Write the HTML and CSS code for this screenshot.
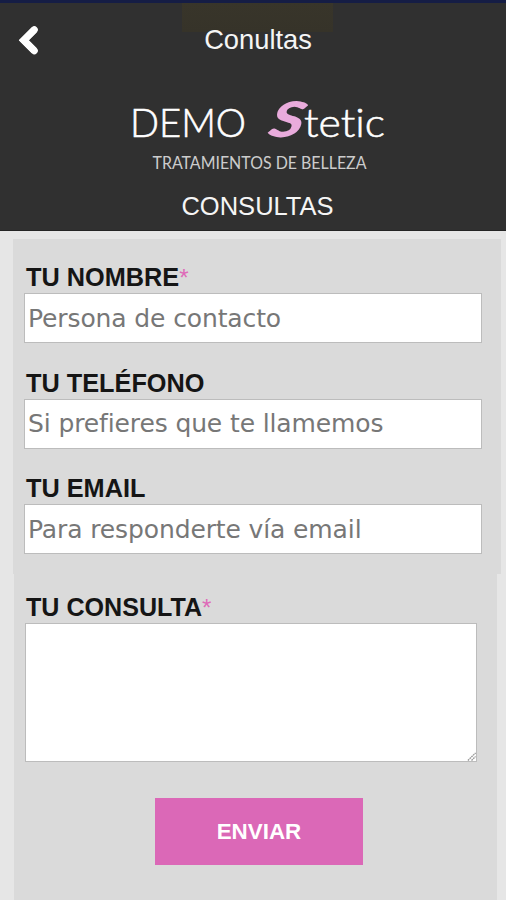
FILE: index.html
```html
<!DOCTYPE html>
<html lang="es">
<head>
<meta charset="utf-8">
<title>Conultas</title>
<link rel="stylesheet" href="styles.css">
</head>
<body>
<header class="header">
  <div class="topbar">
    <svg class="back" viewBox="0 0 24 32" aria-hidden="true"><path d="M17.300 4.800L6.800 15.300L17.300 25.800" fill="none" stroke="#fff" stroke-width="7"/><path d="M17.300 4.800L6.800 15.300L17.300 25.800" fill="none" stroke="#fff" stroke-width="7" stroke-linecap="round"/></svg>
    <h1 class="title">Conultas</h1>
  </div>
  <svg class="logo" viewBox="0 0 270 80">
    <text class="brand" x="10" y="42" textLength="116" lengthAdjust="spacingAndGlyphs">DEMO</text>
    <text class="initial" transform="translate(147 42) skewX(-13)" x="0" y="0" textLength="34" lengthAdjust="spacingAndGlyphs">S</text>
    <text class="brand" x="184" y="42" textLength="81" lengthAdjust="spacingAndGlyphs">tetic</text>
    <text class="tagline" x="32.500" y="74" textLength="214" lengthAdjust="spacingAndGlyphs">TRATAMIENTOS DE BELLEZA</text>
  </svg>
  <h2 class="section">CONSULTAS</h2>
</header>
<form class="form">
  <div class="contact">
    <label class="field"><span class="label">TU NOMBRE<i>*</i></span><input class="input" type="text" placeholder="Persona de contacto"></label>
    <label class="field"><span class="label">TU TELÉFONO</span><input class="input" type="text" placeholder="Si prefieres que te llamemos"></label>
    <label class="field"><span class="label">TU EMAIL</span><input class="input" type="text" placeholder="Para responderte vía email"></label>
  </div>
  <div class="message">
    <label class="query"><span class="label">TU CONSULTA<i>*</i></span>
      <span class="area"><textarea class="textarea"></textarea><svg class="grip" viewBox="0 0 10 10" aria-hidden="true"><path d="M1 9.500L9.500 1M5 9.500L9.500 5" fill="none" stroke="#999" stroke-width="1.500" stroke-dasharray="2 .7"/></svg></span>
    </label>
    <button class="send" type="button">ENVIAR</button>
  </div>
</form>
</body>
</html>
```
FILE: styles.css
```css
* { box-sizing: border-box; }
body {
  margin: 0;
  height: 900px;
  overflow: hidden;
  background: #e6e6e6;
  font-family: "Liberation Sans", Arial, sans-serif;
}
.header {
  height: 231px;
  border-top: 3px solid #151d45;
  border-bottom: 1px solid #242424;
  background:
    linear-gradient(#38352a, #363329) 182px 0 / 151px 29px no-repeat,
    #303030;
  color: #fff;
  display: flex;
  flex-direction: column;
  align-items: center;
}
.topbar {
  width: 100%;
  height: 92px;
  display: grid;
  grid-template-columns: 48px 1fr 38px;
  align-items: start;
}
.back { width: 24px; height: 32px; margin: 22px 0 0 17px; }
.title {
  margin: 21px 0 0;
  font-size: 27.300px;
  line-height: 32px;
  font-weight: 400;
  text-align: center;
  color: #f5f5f5;
}
.logo { width: 270px; height: 80px; margin-left: 4px; flex: none; overflow: visible; }
.brand {
  font: 300 40px Lato, sans-serif;
  font-variant-ligatures: none;
  fill: #fff;
  stroke: #fff;
  stroke-width: .6;
}
.initial { font: italic 900 49px Lato, sans-serif; fill: #e9abdc; }
.tagline { font: 400 17.500px Lato, sans-serif; fill: #ccc; }
.section {
  margin: 16px 0 0;
  padding-left: 9px;
  font-size: 25.500px;
  line-height: 30px;
  font-weight: 400;
  color: #f5f5f5;
}
.form { padding-top: 8px; }
.contact {
  width: 488px;
  height: 335px;
  margin-left: 13px;
  padding: 22px 0 0 11px;
  background: #dadada;
}
.field { display: block; height: 105.500px; }
.label {
  display: block;
  height: 32px;
  padding-left: 2px;
  font-size: 25.300px;
  line-height: 32px;
  font-weight: 700;
  color: #151515;
}
.query .label { padding-left: 1px; font-size: 25.100px; }
.label i { font-style: normal; font-weight: 400; color: #df6ab8; font-size: 24px; }
.input, .textarea {
  display: block;
  margin: 0;
  border: 1px solid #bcbcbc;
  border-radius: 0;
  background: #fff;
  font-family: "DejaVu Sans", Verdana, sans-serif;
  font-size: 25px;
}
.input { width: 458px; height: 50px; padding: 0 3px; letter-spacing: -.12px; }
.input::placeholder { color: #777; opacity: 1; }
.message {
  width: 483px;
  height: 326px;
  margin-left: 14px;
  padding: 17px 0 0 11px;
  background: #dadada;
}
.query { display: block; }
.area { display: block; position: relative; width: 452px; }
.textarea { width: 452px; height: 139px; resize: none; }
.grip { position: absolute; right: 1px; bottom: 1px; width: 9px; height: 9px; }
.send {
  display: block;
  width: 208px;
  height: 67px;
  margin: 36px 0 0 130px;
  padding: 0;
  border: 0;
  background: #db68b7;
  color: #fff;
  font: 700 22.400px "Liberation Sans", Arial, sans-serif;
}
```
